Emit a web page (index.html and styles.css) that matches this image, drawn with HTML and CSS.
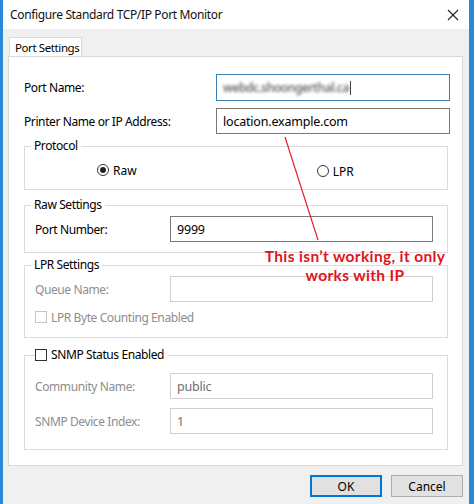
FILE: index.html
```html
<!DOCTYPE html>
<html>
<head>
<meta charset="utf-8">
<link rel="stylesheet" href="styles.css">
</head>
<body>
<div class="window">
  <div class="titlebar">
    <span class="title">Configure Standard TCP/IP Port Monitor</span>
    <svg class="close" width="12" height="12" viewBox="0 0 12 12"><path d="M1 1L11 11M11 1L1 11" stroke="#222" stroke-width="1.1" fill="none"/></svg>
  </div>
  <div class="body">
    <div class="tabs"><div class="tab">Port Settings</div></div>
    <div class="panel">
      <div class="row r1">
        <span class="lbl">Port Name:</span>
        <div class="field focus"><span class="blur">webdc.shoongerthal.ca</span><span class="caret"></span></div>
      </div>
      <div class="row r2">
        <span class="lbl">Printer Name or IP Address:</span>
        <div class="field">location.example.com</div>
      </div>

      <div class="group g-proto">
        <span class="legend">Protocol</span>
        <div class="radios">
          <label class="radio r-raw"><span class="dot on"></span>Raw</label>
          <label class="radio r-lpr"><span class="dot"></span>LPR</label>
        </div>
      </div>

      <div class="group g-raw">
        <span class="legend">Raw Settings</span>
        <div class="grow">
          <span class="glbl">Port Number:</span>
          <div class="field gfield">9999</div>
        </div>
      </div>

      <div class="group g-lpr">
        <span class="legend">LPR Settings</span>
        <div class="grow">
          <span class="glbl dis">Queue Name:</span>
          <div class="field gfield dfield"></div>
        </div>
        <label class="check dis"><span class="box dbox"></span>LPR Byte Counting Enabled</label>
      </div>

      <div class="group g-snmp">
        <span class="legend lcheck"><span class="box"></span>SNMP Status Enabled</span>
        <div class="grow grow1">
          <span class="glbl dis">Community Name:</span>
          <div class="field gfield dfield dtext">public</div>
        </div>
        <div class="grow grow2">
          <span class="glbl dis">SNMP Device Index:</span>
          <div class="field gfield dfield dtext">1</div>
        </div>
      </div>

      <svg class="arrow" width="40" height="110" viewBox="0 0 40 110"><path d="M1 1L34 104" stroke="#e8202a" stroke-width="1.2" fill="none"/></svg>
      <div class="note">This isn’t working, it only<br>works with IP</div>
    </div>
    <div class="buttons">
      <button class="btn ok">OK</button>
      <button class="btn">Cancel</button>
    </div>
  </div>
</div>
</body>
</html>
```

FILE: styles.css
```css
html, body { margin: 0; padding: 0; }
body {
  width: 474px; height: 504px; overflow: hidden;
  font-family: "Noto Sans", "Open Sans", sans-serif;
  font-size: 12px; color: #000;
  background: #f0f0f0;
}
.window {
  width: 474px; height: 504px; box-sizing: border-box;
  border-left: 3px solid #2b88d8; border-right: 5px solid #2b88d8;
  display: flex; flex-direction: column;
}
.titlebar {
  height: 29px; background: #fff; flex: none;
  display: flex; align-items: center; justify-content: space-between;
  padding: 0 10px 0 7px;
}
.title { font-size: 12px; letter-spacing: -0.35px; color: #111; }
.body { flex: 1; display: flex; flex-direction: column; padding: 0 6px 0 5px; }
.tabs { height: 27px; display: flex; align-items: flex-end; padding-left: 1px; }
.tab {
  height: 20px; width: 73px; box-sizing: border-box; white-space: nowrap;
  background: #fff; border: 1px solid #d9d9d9; border-bottom: none;
  padding-left: 5px; line-height: 19px; font-size: 11.5px; letter-spacing: -0.4px;
  position: relative; top: 1px;
}
.panel {
  position: relative;
  height: 410px; box-sizing: border-box;
  background: #fff; border: 1px solid #d9d9d9;
  padding: 17px 12px 0 15px;
  display: flex; flex-direction: column;
}
.row { display: flex; align-items: center; justify-content: space-between; }
.r1 { height: 27px; }
.r2 { height: 26px; margin-top: 7px; }
.lbl { letter-spacing: -0.4px; }
.field {
  width: 234px; height: 100%; box-sizing: border-box;
  border: 1px solid #7a7a7a; padding: 0 6px;
  display: flex; align-items: center; font-size: 12.5px; letter-spacing: -0.2px;
}
.focus { border-color: #3c7fb1; }
.blur { color: #3a3a3a; filter: blur(1.4px); letter-spacing: -0.5px; font-size: 12px; font-weight: 600; opacity: 0.75; }
.caret { width: 1px; height: 14px; background: #444; margin-left: 1px; filter: blur(0.6px); }

.group { position: relative; border: 1px solid #dcdcdc; margin-right: 2px; box-sizing: border-box; }
.legend {
  position: absolute; left: 6px; top: -9px; background: #fff;
  padding: 0 3px; line-height: 16px; letter-spacing: -0.4px;
}
.g-proto { margin-top: 12px; height: 44px; }
.g-raw { margin-top: 15px; height: 48px; }
.g-lpr { margin-top: 12px; height: 73px; }
.g-snmp { margin-top: 17px; height: 95px; }

.radios { display: flex; height: 100%; }
.radio { display: flex; align-items: center; }
.r-raw { margin-left: 72px; margin-top: 16px; height: 14px; }
.r-lpr { margin-left: 180px; margin-top: 17px; height: 14px; }
.dot {
  width: 12px; height: 12px; border: 1px solid #333; border-radius: 50%;
  margin-right: 4px; position: relative; box-sizing: border-box; flex: none;
}
.dot.on::after {
  content: ""; position: absolute; left: 2px; top: 2px; width: 6px; height: 6px;
  border-radius: 50%; background: #222;
}

.grow { display: flex; align-items: center; justify-content: space-between; padding: 0 14px 0 10px; height: 26px; margin-top: 10px; }
.glbl { letter-spacing: -0.4px; }
.gfield { width: 263px; }
.dis { color: #8d8d8d; }
.dfield { border-color: #cfcfcf; }
.dtext { color: #6d6d6d; }
.grow1 { margin-top: 17px; }
.grow2 { margin-top: 9px; }

.check { display: flex; align-items: center; margin: 8px 0 0 10px; height: 14px; letter-spacing: -0.4px; }
.box {
  width: 12px; height: 12px; box-sizing: border-box; border: 1px solid #333;
  margin-right: 4px; flex: none; background: #fff;
}
.dbox { border-color: #c6c6c6; }
.lcheck { display: flex; align-items: center; left: 10px; padding: 0 4px 0 0; color: #000; }

.arrow { position: absolute; left: 275px; top: 79px; }
.note {
  position: absolute; left: 248px; top: 190px; width: 196px;
  text-align: center; color: #e3131c;
  font-family: "Lato", sans-serif; font-weight: 700; font-size: 15.5px; line-height: 19px;
  letter-spacing: 0.35px;
}

.buttons { display: flex; justify-content: flex-end; gap: 9px; padding: 9px 0 0 0; }
.btn {
  width: 72px; height: 22px; box-sizing: border-box;
  background: #e1e1e1; border: 1px solid #adadad;
  font-family: "Noto Sans", sans-serif; font-size: 12px; color: #000; padding: 0;
}
.ok { border: 2px solid #0078d7; }
```
